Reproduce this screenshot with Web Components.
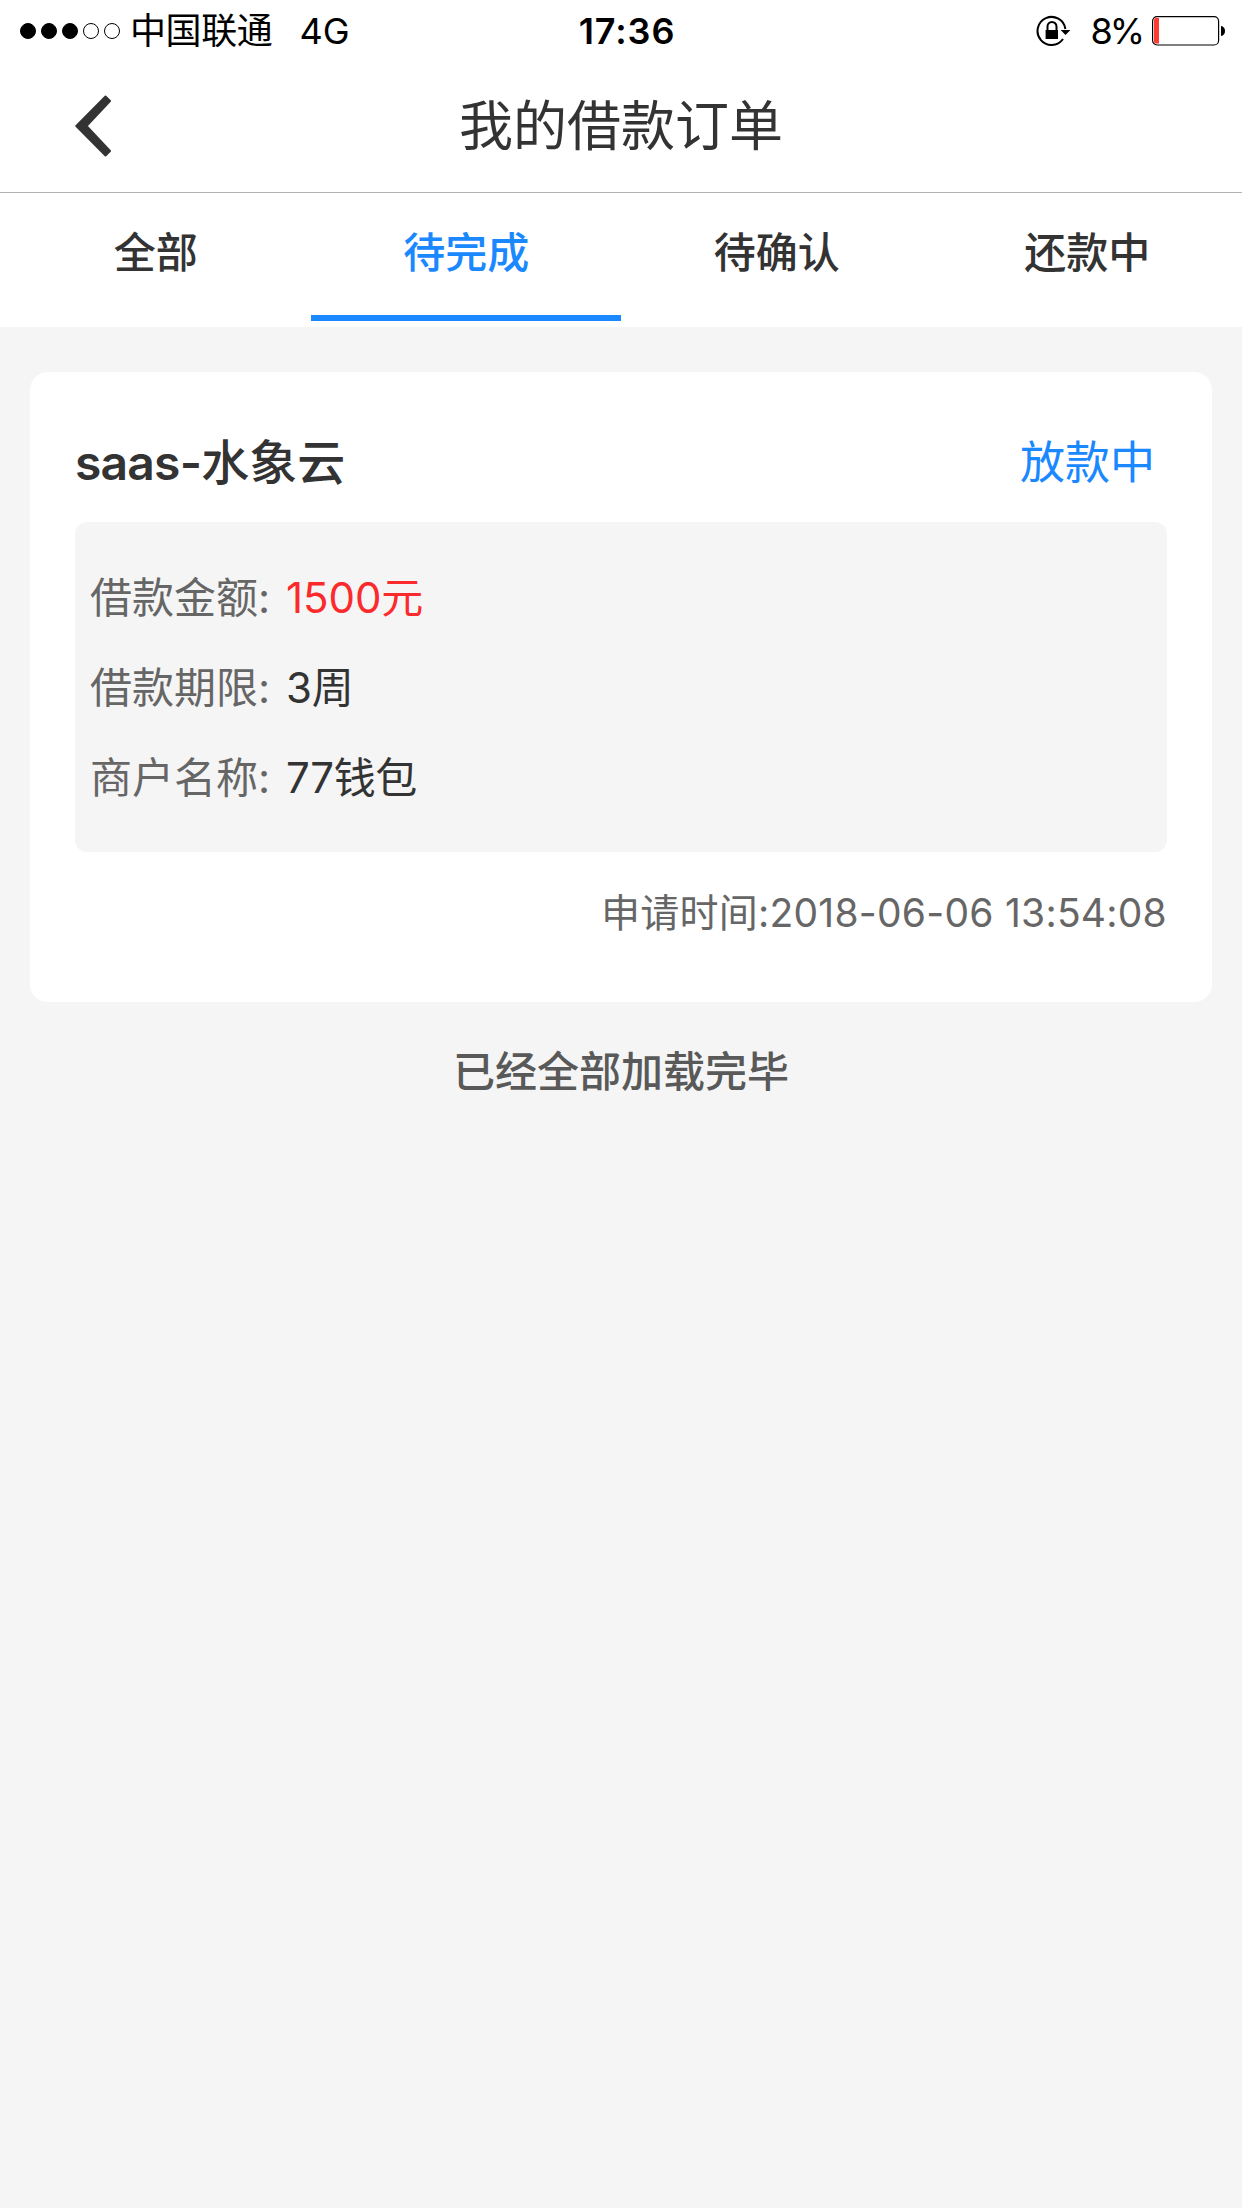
<!DOCTYPE html>
<html lang="zh-CN">
<head>
<meta charset="utf-8">
<title>我的借款订单</title>
<style>
  body {
    margin: 0;
    min-height: 2208px;
    background: #f5f5f5;
    color: #333;
    font-family: Inter, "Noto Sans CJK SC", sans-serif;
  }
</style>
</head>
<body>
<order-page>
  <status-bar slot="header" carrier="中国联通" network="4G" time="17:36" battery="8" signal="3"></status-bar>
  <nav-header slot="header">我的借款订单</nav-header>
  <tab-bar slot="header">
    <tab-item>全部</tab-item>
    <tab-item active>待完成</tab-item>
    <tab-item>待确认</tab-item>
    <tab-item>还款中</tab-item>
  </tab-bar>
  <order-card label="saas-水象云" status="放款中" time="2018-06-06 13:54:08">
    <order-field label="借款金额" highlight>1500元</order-field>
    <order-field label="借款期限">3周</order-field>
    <order-field label="商户名称">77钱包</order-field>
  </order-card>
  <span slot="footer">已经全部加载完毕</span>
</order-page>

<script>
class BaseElement extends HTMLElement {
  constructor() {
    super();
    this.attachShadow({ mode: 'open' });
  }

  connectedCallback() {
    const template = document.createElement('template');
    template.innerHTML = `<style>:host, * { box-sizing: border-box; }${this.getStyles()}</style>${this.getTemplate()}`;
    this.shadowRoot.appendChild(template.content.cloneNode(true));
  }
}

class OrderPage extends BaseElement {
  getTemplate() {
    return `
      <header><slot name="header"></slot></header>
      <main><slot></slot></main>
      <footer><slot name="footer"></slot></footer>
    `;
  }

  getStyles() {
    return `
      :host { display: block; }
      header { background: #fff; }
      main { padding: 45px 30px 0; }
      footer {
        padding-top: 40px;
        text-align: center;
        font-size: 42px;
        line-height: 60px;
        font-weight: 500;
        color: #595959;
      }
    `;
  }
}

class StatusBar extends BaseElement {
  getTemplate() {
    const signal = Number(this.getAttribute('signal'));
    const dots = [0, 1, 2, 3, 4].map((i) => `<i class="${i < signal ? 'on' : ''}"></i>`).join('');
    return `
      <div class="left">
        <div class="dots">${dots}</div>
        <span class="carrier">${this.getAttribute('carrier')}</span>
        <span>${this.getAttribute('network')}</span>
      </div>
      <span class="time">${this.getAttribute('time')}</span>
      <div class="right">
        <svg class="lock" width="36" height="32" viewBox="0 0 36 32">
          <path d="M27 24A14 14 0 1 1 29.4 14" fill="none" stroke="#000" stroke-width="2"/>
          <path d="M24.6 15h9.8L29.5 20z"/>
          <path d="M11.5 16v-4.6a4 4 0 0 1 9 0V16" fill="none" stroke="#000" stroke-width="2"/>
          <rect x="9.6" y="15" width="12.4" height="9"/>
        </svg>
        <span class="percent">${this.getAttribute('battery')}%</span>
        <svg width="74" height="30" viewBox="0 0 74 30">
          <rect x=".6" y=".6" width="66" height="28.4" rx="4.5" fill="none" stroke="#000" stroke-width="1.2"/>
          <path d="M4 2h3v25.5H4a2 2 0 0 1-2-2V4a2 2 0 0 1 2-2z" fill="#ff3b30"/>
          <path d="M69 10q4 .8 4 5t-4 5z"/>
        </svg>
      </div>
    `;
  }

  getStyles() {
    return `
      :host {
        display: grid;
        grid-template-columns: 1fr auto 1fr;
        align-items: center;
        height: 60px;
        padding: 0 16px 0 20px;
        color: #000;
        font-size: 36px;
        line-height: 62px;
      }
      svg { display: block; }
      .left, .right { display: flex; align-items: center; height: 60px; }
      .right { justify-content: flex-end; }
      .dots { display: flex; gap: 5px; margin-right: 10px; }
      .dots i {
        width: 16px;
        height: 16px;
        border: 1px solid #000;
        border-radius: 50%;
      }
      .dots .on { background: #000; }
      .carrier { margin-right: 27px; letter-spacing: -0.4px; }
      .time { font-weight: 600; padding-left: 8px; letter-spacing: 0.9px; }
      .lock { margin-right: 18px; }
      .percent { margin-right: 10px; letter-spacing: -3px; }
    `;
  }
}

class NavHeader extends BaseElement {
  getTemplate() {
    return `
      <svg width="38" height="62" viewBox="0 0 38 62">
        <path d="M30.5 1.5L1.3 31L30.5 60.5L35 56L11.5 31L35 6z" fill="#333" stroke="#333" stroke-width="2" stroke-linejoin="round"/>
      </svg>
      <h1><slot></slot></h1>
    `;
  }

  getStyles() {
    return `
      :host {
        display: grid;
        grid-template-columns: 38px 1fr 38px;
        align-items: center;
        height: 133px;
        padding: 0 75px;
        border-bottom: 1px solid #b2b2b2;
      }
      h1 {
        height: 132px;
        margin: 0;
        text-align: center;
        font-size: 54px;
        line-height: 134px;
        font-weight: 400;
      }
    `;
  }
}

class TabBar extends BaseElement {
  getTemplate() {
    return '<slot></slot>';
  }

  getStyles() {
    return `
      :host {
        display: grid;
        grid-template-columns: repeat(4, 1fr);
        height: 134px;
        padding-bottom: 6px;
      }
    `;
  }
}

class TabItem extends BaseElement {
  getTemplate() {
    return '<slot></slot>';
  }

  getStyles() {
    return `
      :host {
        display: block;
        padding-left: 1px;
        text-align: center;
        font-size: 42px;
        line-height: 119px;
        font-weight: 500;
        border-bottom: 6px solid transparent;
      }
      :host([active]) {
        color: #1a88ff;
        border-color: #1a88ff;
      }
    `;
  }
}

class OrderCard extends BaseElement {
  getTemplate() {
    // latin letters look thinner than hanzi at the same weight
    const label = this.getAttribute('label').replace(/[\x20-\x7e]+/g, '<b>$&</b>');
    return `
      <div class="title">
        <h2>${label}</h2>
        <span class="status">${this.getAttribute('status')}</span>
      </div>
      <div class="fields"><slot></slot></div>
      <div class="time">申请时间:${this.getAttribute('time')}</div>
    `;
  }

  getStyles() {
    return `
      :host {
        display: block;
        height: 630px;
        padding: 30px 45px 0;
        border-radius: 18px;
        background: #fff;
      }
      .title {
        display: flex;
        justify-content: space-between;
        height: 120px;
        line-height: 121px;
        padding-right: 12px;
      }
      h2 { margin: 0; font-size: 48px; font-weight: 500; }
      b { font-weight: 600; letter-spacing: -0.8px; }
      .status { font-size: 45px; color: #1a88ff; }
      .fields {
        padding: 30px 15px;
        border-radius: 12px;
        background: #f5f5f5;
      }
      .time {
        text-align: right;
        font-size: 39px;
        line-height: 121px;
        letter-spacing: 0.25px;
        color: #666;
      }
    `;
  }
}

class OrderField extends BaseElement {
  getTemplate() {
    return `
      <span class="label">${this.getAttribute('label')}:</span>
      <span class="value"><slot></slot></span>
    `;
  }

  getStyles() {
    return `
      :host {
        display: flex;
        gap: 16px;
        height: 90px;
        font-size: 42px;
        line-height: 91px;
      }
      .label { color: #666; }
      .value { letter-spacing: -0.4px; }
      :host([highlight]) .value { color: #fa2a2d; letter-spacing: -0.1px; }
    `;
  }
}

customElements.define('order-page', OrderPage);
customElements.define('status-bar', StatusBar);
customElements.define('nav-header', NavHeader);
customElements.define('tab-bar', TabBar);
customElements.define('tab-item', TabItem);
customElements.define('order-card', OrderCard);
customElements.define('order-field', OrderField);
</script>
</body>
</html>
